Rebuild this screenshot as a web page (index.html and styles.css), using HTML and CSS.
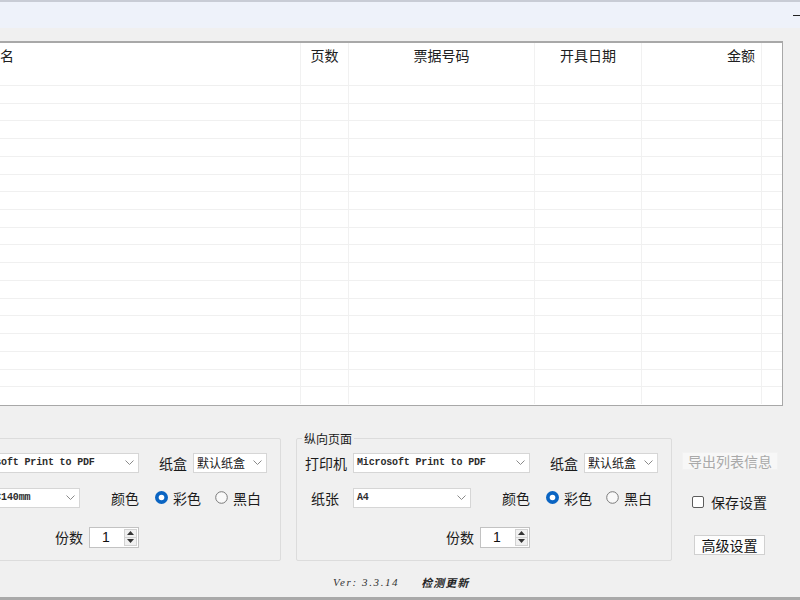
FILE: index.html
```html
<!DOCTYPE html>
<html lang="zh-CN">
<head>
<meta charset="utf-8">
<title>打印设置</title>
<link rel="stylesheet" href="styles.css">
</head>
<body>
<div class="window">
  <div class="titlebar"><span class="min"></span></div>

  <div class="grid">
    <div class="row head">
      <div class="c c-name">文件名</div>
      <div class="c c-center">页数</div>
      <div class="c c-center">票据号码</div>
      <div class="c c-center">开具日期</div>
      <div class="c c-right">金额</div>
      <div class="c"></div>
    </div>
    <div class="row"><div class="c"></div><div class="c"></div><div class="c"></div><div class="c"></div><div class="c"></div><div class="c"></div></div>
    <div class="row"><div class="c"></div><div class="c"></div><div class="c"></div><div class="c"></div><div class="c"></div><div class="c"></div></div>
    <div class="row"><div class="c"></div><div class="c"></div><div class="c"></div><div class="c"></div><div class="c"></div><div class="c"></div></div>
    <div class="row"><div class="c"></div><div class="c"></div><div class="c"></div><div class="c"></div><div class="c"></div><div class="c"></div></div>
    <div class="row"><div class="c"></div><div class="c"></div><div class="c"></div><div class="c"></div><div class="c"></div><div class="c"></div></div>
    <div class="row"><div class="c"></div><div class="c"></div><div class="c"></div><div class="c"></div><div class="c"></div><div class="c"></div></div>
    <div class="row"><div class="c"></div><div class="c"></div><div class="c"></div><div class="c"></div><div class="c"></div><div class="c"></div></div>
    <div class="row"><div class="c"></div><div class="c"></div><div class="c"></div><div class="c"></div><div class="c"></div><div class="c"></div></div>
    <div class="row"><div class="c"></div><div class="c"></div><div class="c"></div><div class="c"></div><div class="c"></div><div class="c"></div></div>
    <div class="row"><div class="c"></div><div class="c"></div><div class="c"></div><div class="c"></div><div class="c"></div><div class="c"></div></div>
    <div class="row"><div class="c"></div><div class="c"></div><div class="c"></div><div class="c"></div><div class="c"></div><div class="c"></div></div>
    <div class="row"><div class="c"></div><div class="c"></div><div class="c"></div><div class="c"></div><div class="c"></div><div class="c"></div></div>
    <div class="row"><div class="c"></div><div class="c"></div><div class="c"></div><div class="c"></div><div class="c"></div><div class="c"></div></div>
    <div class="row"><div class="c"></div><div class="c"></div><div class="c"></div><div class="c"></div><div class="c"></div><div class="c"></div></div>
    <div class="row"><div class="c"></div><div class="c"></div><div class="c"></div><div class="c"></div><div class="c"></div><div class="c"></div></div>
    <div class="row"><div class="c"></div><div class="c"></div><div class="c"></div><div class="c"></div><div class="c"></div><div class="c"></div></div>
    <div class="row"><div class="c"></div><div class="c"></div><div class="c"></div><div class="c"></div><div class="c"></div><div class="c"></div></div>
    <div class="row last"><div class="c"></div><div class="c"></div><div class="c"></div><div class="c"></div><div class="c"></div><div class="c"></div></div>
  </div>

  <div class="bottom">
    <fieldset class="group group-land">
      <legend>横向页面</legend>
      <div class="frow frow1">
        <span class="lbl lbl-printer">打印机</span>
        <div class="sel sel-printer"><span class="sel-text mono">Microsoft Print to PDF</span><svg class="chev" width="9" height="5" viewBox="0 0 9 5"><path d="M0.5 0.5 L4.5 4.5 L8.5 0.5" fill="none" stroke="#8a8a8a" stroke-width="1"/></svg></div>
        <span class="lbl lbl-tray">纸盒</span>
        <div class="sel sel-tray"><span class="sel-text cjk">默认纸盒</span><svg class="chev" width="9" height="5" viewBox="0 0 9 5"><path d="M0.5 0.5 L4.5 4.5 L8.5 0.5" fill="none" stroke="#8a8a8a" stroke-width="1"/></svg></div>
      </div>
      <div class="frow frow2">
        <span class="lbl lbl-paper">纸张</span>
        <div class="sel sel-paper"><span class="sel-text mono">210.0×140mm</span><svg class="chev" width="9" height="5" viewBox="0 0 9 5"><path d="M0.5 0.5 L4.5 4.5 L8.5 0.5" fill="none" stroke="#8a8a8a" stroke-width="1"/></svg></div>
        <span class="lbl lbl-color">颜色</span>
        <svg class="radio radio-first" width="13" height="13" viewBox="0 0 13 13"><circle cx="6.5" cy="6.5" r="6.5" fill="#0a64c2"/><circle cx="6.5" cy="6.5" r="2.8" fill="#fff"/></svg>
        <span class="lbl lbl-opt">彩色</span>
        <svg class="radio radio-second" width="13" height="13" viewBox="0 0 13 13"><circle cx="6.5" cy="6.5" r="5.8" fill="#f9f9f9" stroke="#7a7a7a" stroke-width="1"/></svg>
        <span class="lbl lbl-opt">黑白</span>
      </div>
      <div class="frow frow3">
        <span class="lbl lbl-copies">份数</span>
        <div class="spin">
          <span class="spin-val">1</span>
          <div class="spin-btns">
            <span class="spin-btn"><svg width="7" height="4" viewBox="0 0 7 4"><path d="M0 4 L3.5 0 L7 4 Z" fill="#333"/></svg></span>
            <span class="spin-btn"><svg width="7" height="4" viewBox="0 0 7 4"><path d="M0 0 L3.5 4 L7 0 Z" fill="#333"/></svg></span>
          </div>
        </div>
      </div>
    </fieldset>

    <fieldset class="group group-port">
      <legend>纵向页面</legend>
      <div class="frow frow1">
        <span class="lbl lbl-printer">打印机</span>
        <div class="sel sel-printer"><span class="sel-text mono">Microsoft Print to PDF</span><svg class="chev" width="9" height="5" viewBox="0 0 9 5"><path d="M0.5 0.5 L4.5 4.5 L8.5 0.5" fill="none" stroke="#8a8a8a" stroke-width="1"/></svg></div>
        <span class="lbl lbl-tray">纸盒</span>
        <div class="sel sel-tray"><span class="sel-text cjk">默认纸盒</span><svg class="chev" width="9" height="5" viewBox="0 0 9 5"><path d="M0.5 0.5 L4.5 4.5 L8.5 0.5" fill="none" stroke="#8a8a8a" stroke-width="1"/></svg></div>
      </div>
      <div class="frow frow2">
        <span class="lbl lbl-paper">纸张</span>
        <div class="sel sel-paper"><span class="sel-text mono">A4</span><svg class="chev" width="9" height="5" viewBox="0 0 9 5"><path d="M0.5 0.5 L4.5 4.5 L8.5 0.5" fill="none" stroke="#8a8a8a" stroke-width="1"/></svg></div>
        <span class="lbl lbl-color">颜色</span>
        <svg class="radio radio-first" width="13" height="13" viewBox="0 0 13 13"><circle cx="6.5" cy="6.5" r="6.5" fill="#0a64c2"/><circle cx="6.5" cy="6.5" r="2.8" fill="#fff"/></svg>
        <span class="lbl lbl-opt">彩色</span>
        <svg class="radio radio-second" width="13" height="13" viewBox="0 0 13 13"><circle cx="6.5" cy="6.5" r="5.8" fill="#f9f9f9" stroke="#7a7a7a" stroke-width="1"/></svg>
        <span class="lbl lbl-opt">黑白</span>
      </div>
      <div class="frow frow3">
        <span class="lbl lbl-copies">份数</span>
        <div class="spin">
          <span class="spin-val">1</span>
          <div class="spin-btns">
            <span class="spin-btn"><svg width="7" height="4" viewBox="0 0 7 4"><path d="M0 4 L3.5 0 L7 4 Z" fill="#333"/></svg></span>
            <span class="spin-btn"><svg width="7" height="4" viewBox="0 0 7 4"><path d="M0 0 L3.5 4 L7 0 Z" fill="#333"/></svg></span>
          </div>
        </div>
      </div>
    </fieldset>

    <div class="side">
      <div class="btn btn-export">导出列表信息</div>
      <div class="chk-row"><span class="chk"></span><span class="chk-label">保存设置</span></div>
      <div class="btn btn-adv">高级设置</div>
    </div>
  </div>

  <div class="footer">
    <span class="ver">Ver: 3.3.14</span>
    <span class="update">检测更新</span>
  </div>
</div>
</body>
</html>
```

FILE: styles.css
```css
html, body {
  margin: 0;
  padding: 0;
}

body {
  background: #f0f0f0;
  font-family: "Noto Sans CJK SC", "Noto Sans", sans-serif;
  color: #1b1b1b;
  overflow: hidden;
}

.window {
  width: 800px;
  height: 600px;
  box-sizing: border-box;
  border-bottom: 3px solid #a9a9a9;
  overflow: hidden;
}

/* title bar */
.titlebar {
  height: 28px;
  box-sizing: border-box;
  border-top: 2px solid #c8ccd5;
  background: #eef2fa;
  display: flex;
  justify-content: flex-end;
  align-items: center;
}

.min {
  width: 10px;
  height: 1px;
  background: #222;
  margin-right: -3px;
}

/* list */
.grid {
  margin: 13px 0 0 -41px;
  width: 824px;
  box-sizing: border-box;
  border: 1px solid #a8a8a8;
  border-top-width: 2px;
  background: #fff;
}

.row {
  display: grid;
  grid-template-columns: 341px 48px 186px 107px 120px 20px;
  height: 17.722px;
  box-sizing: border-box;
  border-bottom: 1px solid #f0f0f0;
}

.row.last {
  border-bottom-color: #fff;
}

.c {
  border-right: 1px solid #f1f1f1;
}

.row .c:last-child {
  border-right: none;
}

.row.head {
  height: 43px;
}

.head .c {
  font-size: 14px;
  line-height: 20px;
  padding-top: 2px;
  color: #202020;
  white-space: nowrap;
}

.c-name {
  padding-left: 12px;
}

.c-center {
  text-align: center;
}

.c-right {
  text-align: right;
  padding-right: 6px;
}

/* bottom settings area */
.bottom {
  display: flex;
  align-items: flex-start;
  margin-top: 25px;
}

.group {
  margin: 0;
  padding: 0 0 12px 0;
  width: 376px;
  min-width: 0;
  flex: none;
  box-sizing: border-box;
  border: 1px solid #dcdcdc;
  border-radius: 2px;
}

.group-land {
  margin-left: -95px;
}

.group-port {
  margin-left: 15px;
}

.group legend {
  font-size: 12px;
  line-height: 16px;
  padding: 0 2px;
  margin-left: 5px;
  color: #1b1b1b;
}

.frow {
  display: flex;
  align-items: center;
  height: 20px;
}

.frow1 { margin-top: 6px; }
.frow2 { margin-top: 15px; }
.frow3 { margin-top: 19px; height: 21px; }

.lbl {
  font-size: 14px;
  line-height: 20px;
  white-space: nowrap;
  flex: none;
}

.lbl-printer { margin-left: 8px; }
.lbl-tray { margin-left: 20px; }
.lbl-paper { margin-left: 14px; }
.lbl-color { margin-left: 31px; }
.lbl-opt { margin-left: 5px; }
.lbl-copies { margin-left: 149px; }

.sel {
  height: 20px;
  box-sizing: border-box;
  border: 1px solid #d6d6d6;
  background: #fff;
  display: flex;
  align-items: center;
  padding-left: 3px;
  flex: none;
  overflow: hidden;
}

.sel-printer { margin-left: 6px; width: 177px; }
.sel-tray { margin-left: 6px; width: 74px; }
.sel-paper { margin-left: 14px; width: 118px; }

.sel-text {
  white-space: nowrap;
  color: #1a1a1a;
}

.mono {
  font-family: "Liberation Mono", "DejaVu Sans Mono", monospace;
  font-size: 10px;
  font-weight: bold;
  letter-spacing: -0.15px;
  color: #2b2b2b;
}

.cjk {
  font-size: 12px;
  line-height: 16px;
}

.chev {
  margin-left: auto;
  margin-right: 4px;
  flex: none;
}

.radio {
  flex: none;
  display: block;
}

.radio-first { margin-left: 16px; }
.radio-second { margin-left: 14px; }

.spin {
  margin-left: 6px;
  width: 50px;
  height: 21px;
  box-sizing: border-box;
  border: 1px solid #c2c2c2;
  background: #fff;
  display: flex;
  flex: none;
}

.spin-val {
  flex: 1;
  padding-left: 12px;
  font-family: "Liberation Sans", Arial, sans-serif;
  font-size: 14px;
  line-height: 19px;
  color: #111;
}

.spin-btns {
  width: 13px;
  margin: 1px 1px 1px 0;
  display: flex;
  flex-direction: column;
}

.spin-btn {
  flex: 1;
  background: #f0f0f0;
  border: 1px solid #d2d2d2;
  display: flex;
  align-items: center;
  justify-content: center;
}

.spin-btn + .spin-btn {
  border-top: none;
}

/* right column */
.side {
  margin-left: 10px;
  width: 96px;
  display: flex;
  flex-direction: column;
  align-items: flex-start;
  flex: none;
}

.btn {
  box-sizing: border-box;
  font-size: 14px;
  text-align: center;
  white-space: nowrap;
}

.btn-export {
  margin-top: 21px;
  width: 96px;
  height: 18px;
  line-height: 16px;
  background: #f7f7f7;
  border: 1px solid #f2f2f2;
  color: #a9a9a9;
}

.chk-row {
  margin-top: 24px;
  height: 16px;
  padding-left: 10px;
  display: flex;
  align-items: center;
}

.chk {
  width: 12px;
  height: 12px;
  box-sizing: border-box;
  border: 1px solid #5c5c5c;
  border-radius: 2px;
  background: #fff;
}

.chk-label {
  margin-left: 7px;
  font-size: 14px;
  line-height: 16px;
}

.btn-adv {
  margin-top: 25px;
  margin-left: 12px;
  width: 71px;
  height: 20px;
  line-height: 18px;
  background: #fdfdfd;
  border: 1px solid #d0d0d0;
  color: #111;
}

/* footer */
.footer {
  height: 36px;
  box-sizing: border-box;
  padding: 6px 0 0 333px;
  display: flex;
  align-items: center;
}

.ver {
  font-family: "Liberation Serif", "Times New Roman", serif;
  font-style: italic;
  font-size: 11px;
  line-height: 14px;
  letter-spacing: 1.6px;
  color: #333;
}

.update {
  margin-left: 22px;
  font-size: 11px;
  line-height: 14px;
  font-style: italic;
  font-weight: bold;
  letter-spacing: 1px;
  color: #222;
}
```
